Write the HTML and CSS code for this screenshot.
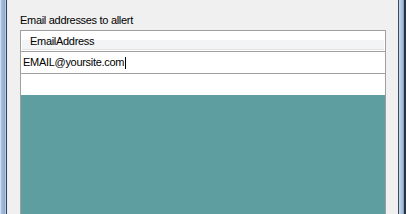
FILE: index.html
```html
<!DOCTYPE html>
<html>
<head>
<meta charset="utf-8">
<link rel="stylesheet" href="styles.css">
</head>
<body>
<div class="window">
  <div class="frame frame-left"></div>
  <div class="client">
    <div class="label">Email addresses to allert</div>
    <div class="grid">
      <div class="header"><span class="header-cell">EmailAddress</span></div>
      <div class="row editing"><span class="cell-text">EMAIL@yoursite.com</span><span class="caret"></span></div>
      <div class="row"></div>
    </div>
  </div>
  <div class="frame frame-right"></div>
</div>
</body>
</html>
```
FILE: styles.css
```css
html, body {
  margin: 0;
  padding: 0;
  overflow: hidden;
}
.window {
  display: flex;
  width: 406px;
  height: 214px;
  font-family: "Liberation Sans", Arial, sans-serif;
  font-size: 11px;
  letter-spacing: -0.3px;
  color: #000;
}
.frame {
  width: 8px;
  flex: none;
}
.frame-left {
  background: linear-gradient(to right,
    #d2dded 0, #d2dded 1px,
    #a9c2e2 1px, #8ea9cf 5px,
    #b8cbe3 5px, #b8cbe3 6px,
    #34455a 6px, #34455a 7px,
    #e6ebf1 7px, #e6ebf1 8px);
}
.frame-right {
  background: linear-gradient(to right,
    #3f4b5a 0, #3f4b5a 1px,
    #c7d7ec 1px, #9cb8dd 5px,
    #8aa0bb 5px, #8aa0bb 6px,
    #2a3340 6px, #2a3340 8px);
}
.client {
  flex: 1;
  background: #f0f0f0;
  padding: 0 12px;
  display: flex;
  flex-direction: column;
  min-width: 0;
}
.label {
  margin-top: 14px;
  line-height: 13px;
  height: 13px;
  margin-bottom: 3px;
}
.grid {
  flex: 1;
  border: 1px solid #a0a0a0;
  border-bottom: none;
  background: #5f9ea0;
  display: flex;
  flex-direction: column;
}
.header {
  height: 20px;
  line-height: 20px;
  background: linear-gradient(to bottom, #ffffff 0, #ffffff 9px, #f3f4f6 9px, #f3f4f6 18px, #e3e4e6 18px, #e3e4e6 19px, #ffffff 19px);
  border-bottom: 1px solid #a0a0a0;
  padding-left: 9px;
  box-shadow: inset 1px 0 0 #ffffff, inset -1px 0 0 #ffffff;
}
.row {
  height: 21px;
  line-height: 21px;
  background: #fff;
  border-bottom: 1px solid #a0a0a0;
  padding-left: 2px;
  display: flex;
  align-items: center;
}
.row:last-child {
  border-bottom: none;
}
.caret {
  display: inline-block;
  width: 1px;
  height: 12px;
  background: #000;
  margin-left: 1px;
  margin-top: 1px;
}
```
